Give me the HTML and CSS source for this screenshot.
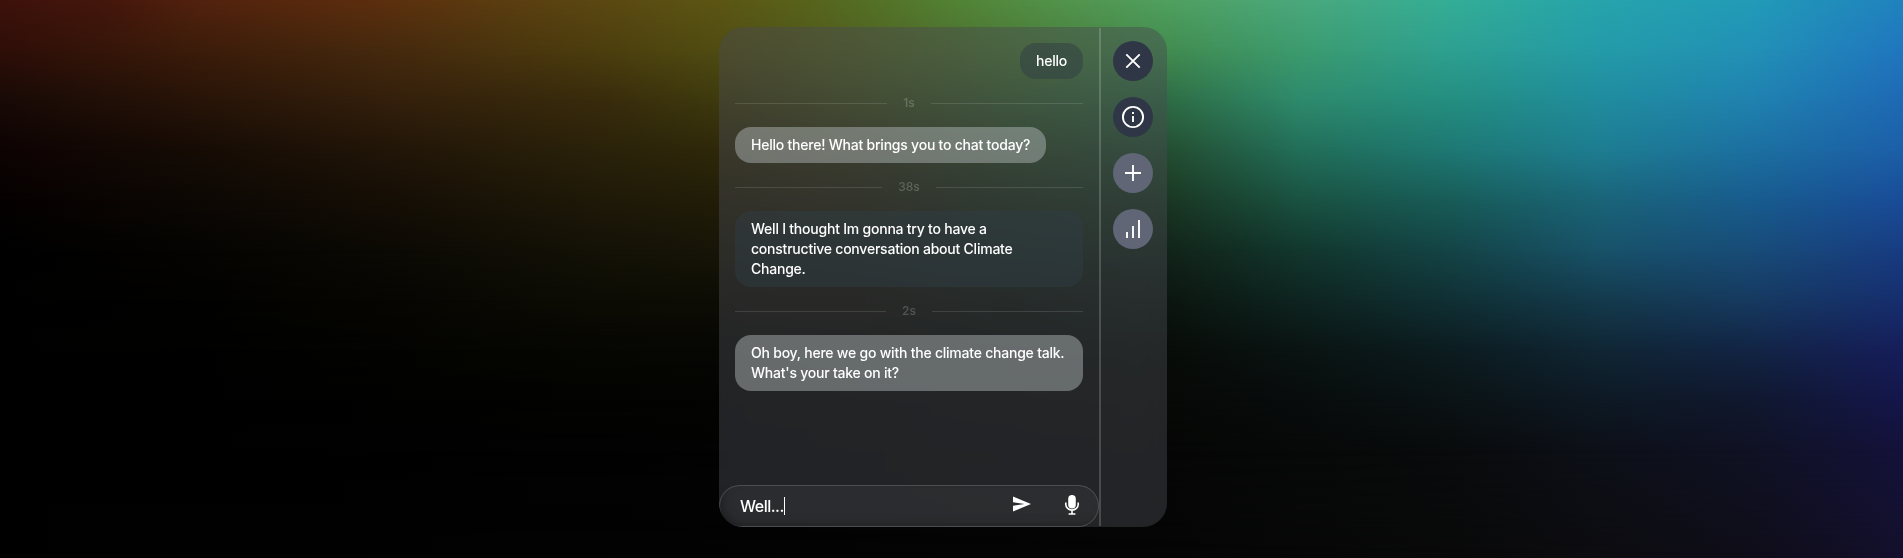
FILE: index.html
```html
<!DOCTYPE html>
<html lang="en">
<head>
<meta charset="utf-8">
<title>Chat</title>
<link rel="stylesheet" href="styles.css">
</head>
<body>
<div class="backdrop">
  <div class="band band-0"></div>
  <div class="band band-50"></div>
  <div class="band band-100"></div>
  <div class="band band-150"></div>
  <div class="band band-200"></div>
  <div class="band band-250"></div>
  <div class="band band-300"></div>
  <div class="band band-350"></div>
  <div class="band band-400"></div>
  <div class="band band-450"></div>
  <div class="band band-558"></div>
</div>
<main class="panel">
  <section class="chat">
    <div class="messages">
      <div class="bubble mine short">hello</div>
      <div class="divider"><span>1s</span></div>
      <div class="bubble theirs">Hello there! What brings you to chat today?</div>
      <div class="divider"><span>38s</span></div>
      <div class="bubble mine">Well I thought Im gonna try to have a constructive conversation about Climate Change.</div>
      <div class="divider"><span>2s</span></div>
      <div class="bubble theirs">Oh boy, here we go with the climate change talk. What's your take on it?</div>
    </div>
    <div class="composer">
      <span class="draft">Well...</span><span class="caret"></span>
      <svg class="send" width="18" height="16" viewBox="0 0 18 16"><path d="M0 .5 18 8 0 15.500V9.700L11.500 8 0 6.300z" fill="#fff"/></svg>
      <svg class="mic" width="14" height="20" viewBox="0 0 14 20"><rect x="3.200" y="0" width="7.600" height="13.500" rx="3.800" fill="#fff"/><path d="M.8 7.500v2a6.200 5.600 0 0 0 12.400 0v-2M7 15.300v3M3.600 19h6.800" fill="none" stroke="#fff" stroke-width="1.600"/></svg>
    </div>
  </section>
  <aside class="rail">
    <button class="round dark"><svg width="24" height="24" viewBox="0 0 24 24"><path d="M5.300 5.300 18.700 18.700M18.700 5.300 5.300 18.700"/></svg></button>
    <button class="round dark"><svg width="24" height="24" viewBox="0 0 24 24"><circle cx="12" cy="12" r="10.100"/><path d="M12 11v6M12 7v2"/></svg></button>
    <button class="round light"><svg width="24" height="24" viewBox="0 0 24 24"><path d="M12 4v16M4 12h16"/></svg></button>
    <button class="round light"><svg width="24" height="24" viewBox="0 0 24 24"><path d="M6 15v6M12 9v12M18 3v18"/></svg></button>
  </aside>
</main>
</body>
</html>
```

FILE: styles.css
```css
* { box-sizing: border-box; }
body {
  margin: 0;
  height: 558px;
  overflow: hidden;
  background: #000;
  font-family: Inter, "Liberation Sans", sans-serif;
  color: #fff;
}
.backdrop { position: absolute; inset: 0; }
.band {
  position: absolute;
  inset: 0;
  -webkit-mask-image: linear-gradient(to bottom, transparent var(--from), #000 var(--to));
  mask-image: linear-gradient(to bottom, transparent var(--from), #000 var(--to));
}
.band-0 {
  --from: -1px; --to: 0px;
  background: linear-gradient(to right, rgb(62,18,12) 0, rgb(68,22,12) 100px, rgb(82,34,14) 200px, rgb(92,46,14) 370px, rgb(91,72,18) 600px, rgb(92,86,20) 720px, rgb(88,98,26) 800px, rgb(84,110,36) 860px, rgb(82,132,54) 960px, rgb(82,147,76) 1060px, rgb(80,160,95) 1167px, rgb(74,168,125) 1300px, rgb(52,174,150) 1450px, rgb(38,164,172) 1600px, rgb(34,155,184) 1750px, rgb(32,130,190) 1903px);
}
.band-50 {
  --from: 0px; --to: 50px;
  background: linear-gradient(to right, rgb(46,14,8) 0, rgb(60,28,10) 200px, rgb(70,42,14) 400px, rgb(76,62,14) 600px, rgb(80,76,18) 720px, rgb(80,100,36) 880px, rgb(74,126,58) 1050px, rgb(66,140,80) 1167px, rgb(60,155,110) 1300px, rgb(46,160,145) 1450px, rgb(36,155,168) 1600px, rgb(34,145,182) 1750px, rgb(32,118,190) 1903px);
}
.band-100 {
  --from: 50px; --to: 100px;
  background: linear-gradient(to right, rgb(24,10,6) 0, rgb(40,20,8) 200px, rgb(52,32,12) 400px, rgb(56,43,12) 600px, rgb(62,58,14) 720px, rgb(64,77,28) 850px, rgb(56,95,48) 1010px, rgb(46,108,68) 1167px, rgb(46,138,108) 1300px, rgb(36,142,128) 1450px, rgb(32,140,158) 1600px, rgb(32,130,175) 1750px, rgb(30,105,180) 1903px);
}
.band-150 {
  --from: 100px; --to: 150px;
  background: linear-gradient(to right, rgb(14,3,3) 0, rgb(22,12,5) 200px, rgb(34,22,8) 400px, rgb(42,34,10) 600px, rgb(46,40,10) 720px, rgb(48,50,20) 850px, rgb(42,68,34) 1010px, rgb(36,78,50) 1167px, rgb(34,110,88) 1300px, rgb(30,120,115) 1450px, rgb(30,125,145) 1600px, rgb(28,112,160) 1750px, rgb(28,95,168) 1903px);
}
.band-200 {
  --from: 150px; --to: 200px;
  background: linear-gradient(to right, rgb(6,1,1) 0, rgb(13,8,4) 200px, rgb(22,15,6) 400px, rgb(31,25,8) 600px, rgb(34,29,8) 720px, rgb(34,34,14) 850px, rgb(28,46,26) 1010px, rgb(26,55,35) 1167px, rgb(26,82,65) 1300px, rgb(24,92,88) 1450px, rgb(26,100,120) 1600px, rgb(24,92,142) 1750px, rgb(25,76,152) 1903px);
}
.band-250 {
  --from: 200px; --to: 250px;
  background: linear-gradient(to right, #000 0, rgb(5,4,2) 200px, rgb(12,10,4) 400px, rgb(20,18,7) 600px, rgb(23,21,8) 720px, rgb(23,24,10) 850px, rgb(19,31,18) 1010px, rgb(18,36,26) 1167px, rgb(18,55,45) 1300px, rgb(20,68,70) 1450px, rgb(24,82,105) 1600px, rgb(24,76,120) 1750px, rgb(24,60,130) 1903px);
}
.band-300 {
  --from: 250px; --to: 300px;
  background: linear-gradient(to right, #000 0, rgb(2,2,0) 200px, rgb(7,6,2) 400px, rgb(13,12,4) 600px, rgb(14,13,5) 850px, rgb(10,18,10) 1010px, rgb(12,22,16) 1167px, rgb(14,36,32) 1300px, rgb(16,48,52) 1450px, rgb(20,58,76) 1600px, rgb(22,58,96) 1750px, rgb(22,46,110) 1903px);
}
.band-350 {
  --from: 300px; --to: 350px;
  background: linear-gradient(to right, #000 0, rgb(1,1,0) 200px, rgb(6,6,2) 600px, rgb(7,8,4) 850px, rgb(8,12,9) 1167px, rgb(10,20,18) 1300px, rgb(12,28,32) 1450px, rgb(16,38,52) 1600px, rgb(18,36,68) 1750px, rgb(22,30,90) 1903px);
}
.band-400 {
  --from: 350px; --to: 400px;
  background: linear-gradient(to right, #000 0, #000 200px, rgb(3,3,1) 600px, rgb(7,9,7) 1167px, rgb(8,12,12) 1300px, rgb(11,19,21) 1450px, rgb(14,25,36) 1600px, rgb(16,24,46) 1750px, rgb(20,22,74) 1903px);
}
.band-450 {
  --from: 400px; --to: 450px;
  background: linear-gradient(to right, #000 0, #000 200px, #020202 600px, rgb(5,6,5) 1167px, rgb(7,9,8) 1300px, rgb(9,11,12) 1450px, rgb(13,16,24) 1600px, rgb(16,18,36) 1750px, rgb(20,18,58) 1903px);
}
.band-558 {
  --from: 450px; --to: 558px;
  background: linear-gradient(to right, #000 0, #020202 600px, #050505 1167px, #070707 1300px, #090909 1450px, rgb(13,12,16) 1600px, rgb(15,13,24) 1750px, rgb(20,16,44) 1903px);
}
.panel {
  position: relative;
  display: flex;
  width: 448px;
  height: 500px;
  margin: 27px 0 0 719px;
  border-radius: 24px;
  overflow: hidden;
  background: rgba(73, 75, 83, .45);
  backdrop-filter: blur(12px);
}
.chat {
  width: 380px;
  display: flex;
  flex-direction: column;
}
.messages {
  flex: 1;
  display: flex;
  flex-direction: column;
  align-items: flex-start;
  padding: 16px;
}
.bubble {
  padding: 8px 16px;
  border-radius: 16px;
  font-size: 14px;
  line-height: 20px;
  font-weight: 500;
  letter-spacing: -.225px;
}
.mine { background: rgba(48, 59, 68, .5); }
.short { align-self: flex-end; }
.theirs { background: rgba(178, 184, 188, .47); }
.divider {
  width: 100%;
  height: 48px;
  display: flex;
  align-items: center;
  gap: 16px;
  font-size: 12px;
  font-weight: 500;
  color: rgba(255, 255, 255, .2);
}
.divider span { padding-bottom: 2px; }
.divider::before, .divider::after {
  content: "";
  flex: 1;
  height: 1px;
  background: rgba(255, 255, 255, .12);
}
.composer {
  height: 42px;
  display: flex;
  align-items: center;
  padding: 0 19px 0 20px;
  border: 1px solid rgba(255, 255, 255, .16);
  border-radius: 21px;
  background: rgba(255, 255, 255, .045);
  box-shadow: inset 6px -5px 12px -6px rgba(0, 0, 0, .35);
  font-size: 16px;
  font-weight: 500;
  letter-spacing: -.5px;
}
.caret { width: 1px; height: 18px; background: #fff; }
.send { margin: -4px 0 0 auto; }
.mic { margin: -2px 0 0 34px; }
.rail {
  flex: 1;
  display: flex;
  flex-direction: column;
  align-items: center;
  gap: 16px;
  margin: 1px 0;
  padding: 13px 2px 0 0;
  border-left: 2px solid rgba(255, 255, 255, .18);
}
.round {
  width: 40px;
  height: 40px;
  display: grid;
  place-items: center;
  padding: 0;
  border: 0;
  border-radius: 50%;
}
.round svg { fill: none; stroke: #fff; stroke-width: 1.900; }
.dark { background: #2f3747; }
.light { background: #606676; }
```
